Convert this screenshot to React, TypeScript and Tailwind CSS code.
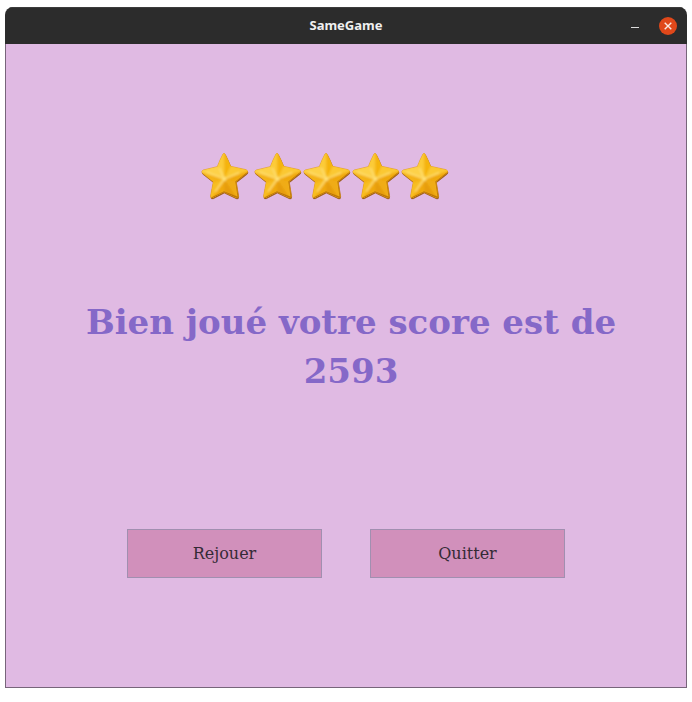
import { useId } from "react";

const outline =
  "M75 15Q78 11 81 15Q90 32 98 52L144 62Q152 65 147 72L114 98L121 141Q121 149 114 146L78 129L45 146Q37 149 38 140L46 98L13 72Q9 65 16 63L58 53Q66 32 75 15Z";

function Star() {
  const id = useId();
  return (
    <svg className="size-12 shrink-0" viewBox="9 9 144 144" aria-hidden="true">
      <defs>
        <clipPath id={id + "c"}>
          <path d={outline} />
        </clipPath>
        <filter id={id + "b"} x="-10%" y="-10%" width="120%" height="120%">
          <feGaussianBlur stdDeviation="2" />
        </filter>
        <filter id={id + "f"} x="-10%" y="-10%" width="120%" height="120%">
          <feGaussianBlur stdDeviation="3" />
        </filter>
      </defs>
      <path d={outline} transform="translate(1 3)" fill="#8a4f14" stroke="#a5641e" strokeWidth="3" strokeOpacity="0.7" filter={`url(#${id}b)`} />
      <path d={outline} fill="#f7bd20" stroke="#dc9419" strokeWidth="2" />
      <g clipPath={`url(#${id}c)`}>
        <g filter={`url(#${id}f)`}>
          <path d="M79 90L78 0L52 54Z" fill="#fccb38" />
          <path d="M79 90L78 0L103 54Z" fill="#f5b40e" />
          <path d="M79 90L99 50L164 62Z" fill="#fbc830" />
          <path d="M79 90L164 62L113 102Z" fill="#f0a90e" />
          <path d="M79 90L113 96L126 162Z" fill="#f0ac14" />
          <path d="M79 90L126 162L78 128Z" fill="#e69c0a" />
          <path d="M79 90L78 128L32 162Z" fill="#f0a90c" />
          <path d="M79 90L32 162L42 98Z" fill="#f8be22" />
          <path d="M79 90L46 102L-2 66Z" fill="#f4b213" />
          <path d="M79 90L-2 66L56 50Z" fill="#fdd14a" />
          <path d="M79 90L64 56M79 90L26 69M79 90L124 71M79 90L52 128" stroke="#ffe27a" strokeWidth="4" />
          <circle cx="79" cy="90" r="6" fill="#ffe27a" />
        </g>
        <path d="M147 72L114 98L121 146L78 129L40 147" fill="none" stroke="#a86008" strokeWidth="4" strokeOpacity="0.65" filter={`url(#${id}b)`} />
      </g>
    </svg>
  );
}

function GameButton({ label }: { label: string }) {
  return (
    <button
      type="button"
      className="h-[49px] w-[195px] border border-[#a18fb0] bg-[#d190bb] text-base text-[#352b36]"
    >
      {label}
    </button>
  );
}

export default function App() {
  return (
    <div className="bg-white pt-[7px] pr-[5px] pb-[13px] pl-[5px] font-['DejaVu_Serif',serif]">
      <div className="overflow-hidden rounded-t-lg">
        <header className="grid h-[37px] grid-cols-[1fr_auto_1fr] items-center border-t border-[#3c3c3c] bg-[#2c2c2c] px-[10px]">
          <h1 className="col-start-2 font-['Noto_Sans',sans-serif] text-[13px] font-bold text-[#f0f0f0]">
            SameGame
          </h1>
          <div className="flex items-center justify-end gap-5">
            <button type="button" aria-label="Réduire" className="flex h-[18px] w-2 items-center">
              <span className="mt-[3px] h-px w-full bg-[#dcdcdc]" />
            </button>
            <button
              type="button"
              aria-label="Fermer"
              className="flex size-[18px] items-center justify-center rounded-full bg-[#e0481a]"
            >
              <svg className="size-2" viewBox="0 0 8 8" aria-hidden="true">
                <path d="M0.7 0.7L7.3 7.3M7.3 0.7L0.7 7.3" stroke="#fbe9e2" strokeWidth="1.4" />
              </svg>
            </button>
          </div>
        </header>
        <main className="flex flex-col items-center border-x border-b border-[#77657a] bg-[#e0bae3] pt-[108px] pb-[109px]">
          <div className="flex gap-px pr-[42px]" role="img" aria-label="5 étoiles">
            <div className="mr-1">
              <Star />
            </div>
            <Star />
            <Star />
            <Star />
            <Star />
          </div>
          <h2 className="mt-[98px] pl-[10px] text-center text-[34px] leading-[49px] font-bold text-[#8568c8]">
            Bien joué votre score est de
            <br />
            2593
          </h2>
          <div className="mt-[133px] flex gap-12">
            <GameButton label="Rejouer" />
            <GameButton label="Quitter" />
          </div>
        </main>
      </div>
    </div>
  );
}
